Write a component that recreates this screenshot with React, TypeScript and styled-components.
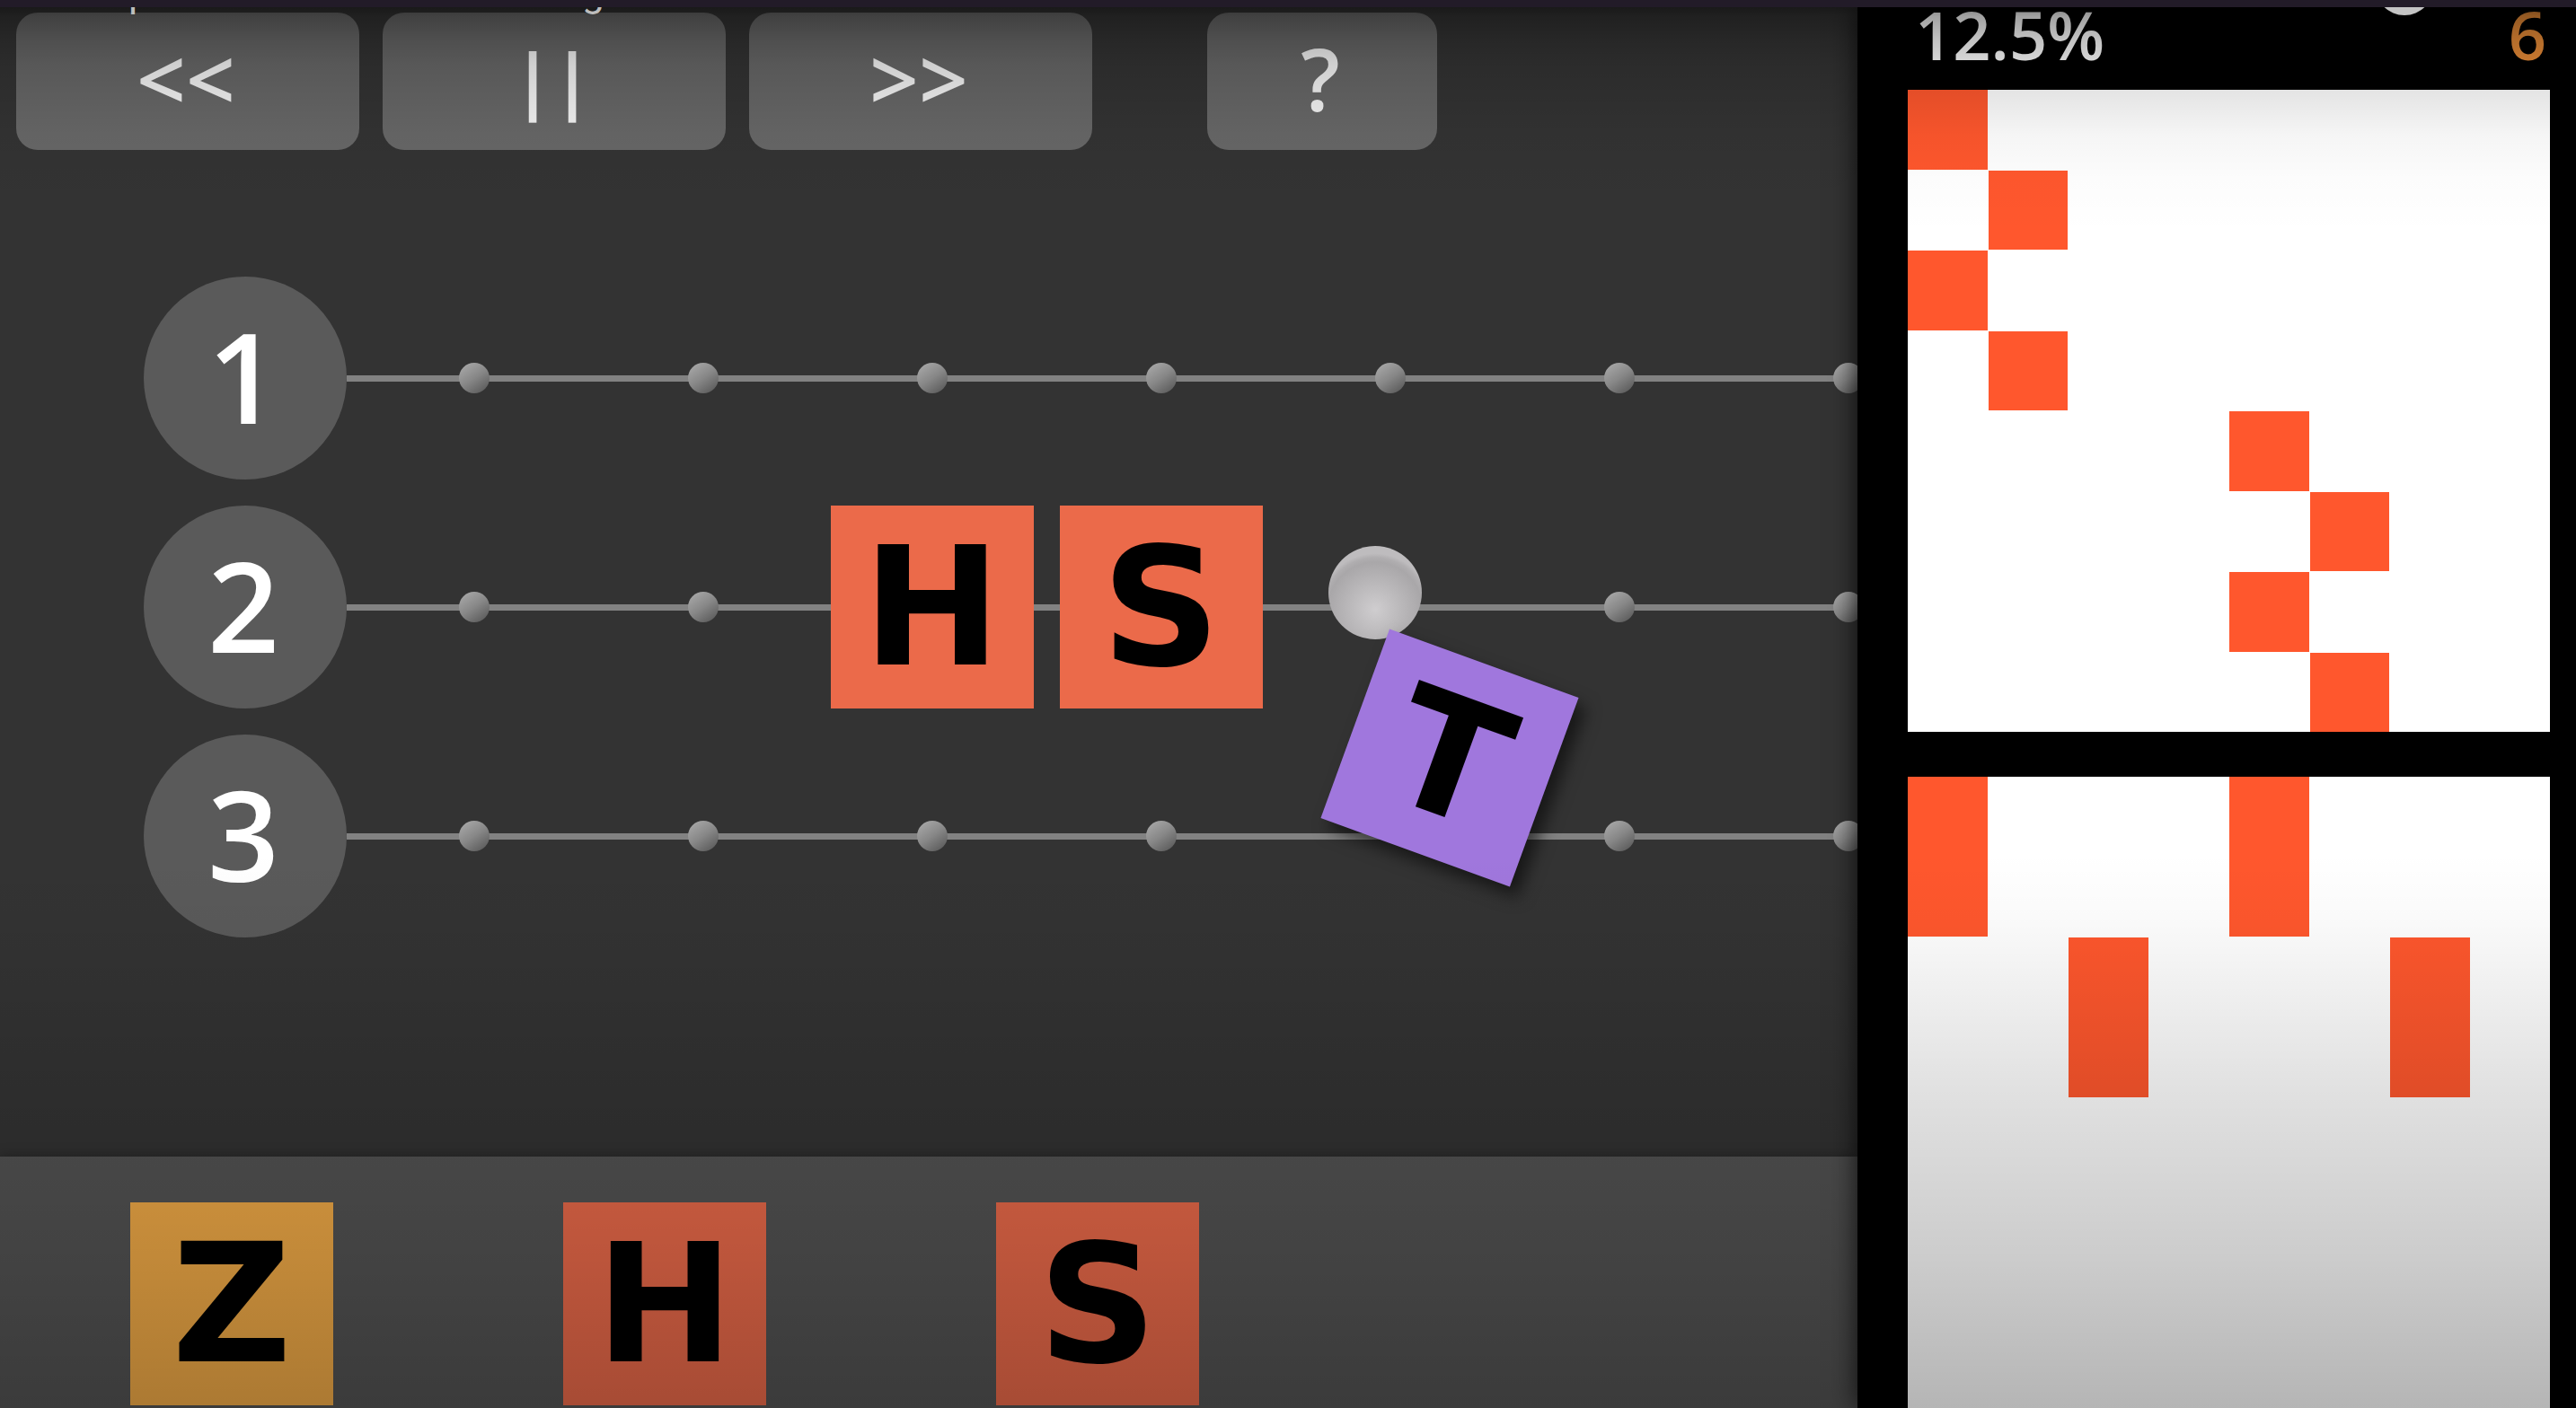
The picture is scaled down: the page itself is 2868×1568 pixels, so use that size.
import React from "react";
import styled, { createGlobalStyle } from "styled-components";

const GlobalStyle = createGlobalStyle`
  *, *::before, *::after { box-sizing: border-box; }
  body { margin: 0; background: #000; font-family: "Open Sans", "Noto Sans", sans-serif; }
`;

const Page = styled.div`
  position: relative;
  display: flex;
  flex-direction: column;
  height: 100vh;
  overflow: hidden;
`;

const WindowBar = styled.div`
  flex: none;
  height: 8px;
  background: #221b28;
  position: relative;
  z-index: 5;
`;

const Game = styled.main`
  flex: 1;
  min-height: 0;
  display: flex;
`;

const Workspace = styled.section`
  position: relative;
  flex: 1;
  min-width: 0;
  display: flex;
  flex-direction: column;
  overflow: hidden;
  background: #333;
`;

const Toolbar = styled.div`
  display: flex;
  gap: 26px;
  padding: 6px 18px 0;
`;

const ToolButton = styled.button<{ $small?: boolean }>`
  display: flex;
  align-items: center;
  justify-content: center;
  flex: none;
  width: ${(p) => (p.$small ? 256 : 382)}px;
  height: 153px;
  margin-left: ${(p) => (p.$small ? 102 : 0)}px;
  padding: 0 4px 8px 0;
  border: 0;
  border-radius: 24px;
  background: #676767;
  color: #f4f4f4;
  font: 600 96px/96px "Open Sans", "Noto Sans", sans-serif;
`;

const PauseLabel = styled.span`
  font-size: 80px;
  font-weight: 700;
`;

const Lanes = styled.div`
  flex: 1;
  min-height: 0;
  display: flex;
  flex-direction: column;
  gap: 29px;
  padding: 141px 0 0 160px;
`;

const Lane = styled.div`
  display: flex;
  flex: none;
  height: 226px;
`;

const LaneNumber = styled.div`
  flex: none;
  display: flex;
  align-items: center;
  justify-content: center;
  width: 226px;
  padding: 0 4px 6px 0;
  border-radius: 50%;
  background: #5a5a5a;
  color: #fff;
  font-size: 140px;
  line-height: 140px;
  font-weight: 600;
`;

const Track = styled.div`
  flex: 1;
  min-width: 0;
  display: flex;
  overflow: hidden;
  padding-left: 14px;
  background: linear-gradient(#828282, #828282) center / 100% 7px no-repeat;
`;

const Slot = styled.div`
  flex: 0 0 255px;
  display: flex;
  align-items: center;
  justify-content: center;
`;

const Node = styled.span`
  width: 34px;
  height: 34px;
  border-radius: 50%;
  background: linear-gradient(145deg, #a6a6a6 10%, #878787 50%, #5c5c5c 90%);
`;

const Tile = styled.div<{ $color: string }>`
  flex: none;
  display: flex;
  align-items: center;
  justify-content: center;
  width: 226px;
  height: 226px;
  background: ${(p) => p.$color};
  color: #000;
  font: 700 184px/184px "DejaVu Sans", sans-serif;
`;

const Ball = styled.span`
  position: absolute;
  left: 1479px;
  top: 600px;
  width: 104px;
  height: 104px;
  border-radius: 50%;
  background: radial-gradient(circle at 50% 68%, #cfcdcf 0, #bcbabc 30%, #a9a7a9 60%, #b0aeb0 66%, #bebcbe 71%);
`;

const HeldTile = styled(Tile)`
  position: absolute;
  left: 1502px;
  top: 724px;
  width: 224px;
  height: 224px;
  transform: rotate(20deg);
  box-shadow: 12px 8px 18px rgba(0, 0, 0, 0.55);
`;

const Tray = styled.div`
  flex: none;
  display: flex;
  gap: 256px;
  padding: 51px 145px 3px;
  background: #535353;
  box-shadow: 0 0 14px rgba(0, 0, 0, 0.3);
`;

const Side = styled.aside`
  position: relative;
  z-index: 1;
  flex: 0 0 800px;
  display: flex;
  flex-direction: column;
  padding: 0 29px 0 56px;
  background: #000;
  box-shadow: 0 0 28px rgba(0, 0, 0, 0.8);
`;

const Stats = styled.div`
  flex: none;
  display: flex;
  justify-content: space-between;
  height: 92px;
  padding: 0 4px 0 8px;
  font-size: 74px;
  line-height: 62px;
  font-weight: 600;
  color: #fff;
`;

const Count = styled.span`
  color: #ec8e38;
`;

const Pattern = styled.div<{ $rows: number }>`
  flex: none;
  display: grid;
  grid-template-columns: repeat(8, 1fr);
  grid-template-rows: repeat(${(p) => p.$rows}, 1fr);
  gap: 1px;
  aspect-ratio: 1;
  background: #fff;

  & + & { margin-top: 50px; }
`;

const Cell = styled.span<{ $col: number; $row: number }>`
  grid-column: ${(p) => p.$col + 1};
  grid-row: ${(p) => p.$row + 1};
  background: #ff572d;
`;

const Shade = styled.div`
  position: absolute;
  inset: 0;
  z-index: 3;
  pointer-events: none;
  background: linear-gradient(
    rgba(0, 0, 0, 0.5) 8px,
    rgba(0, 0, 0, 0.37) 18px,
    rgba(0, 0, 0, 0.24) 44px,
    rgba(0, 0, 0, 0.15) 72px,
    rgba(0, 0, 0, 0.1) 104px,
    rgba(0, 0, 0, 0.04) 150px,
    rgba(0, 0, 0, 0.01) 200px,
    transparent 260px,
    transparent 950px,
    rgba(0, 0, 0, 0.02) 1020px,
    rgba(0, 0, 0, 0.12) 1220px,
    rgba(0, 0, 0, 0.2) 1400px,
    rgba(0, 0, 0, 0.29) 1568px
  );
`;

/* Player header that has slid up behind the window bar. */
const Header = styled.div`
  position: absolute;
  left: 0;
  right: 0;
  top: -34px;
  z-index: 4;
  display: flex;
  height: 52px;
  padding: 0 158px 0 143px;
  font: 400 44px/52px Roboto, sans-serif;
  color: #bdbdbd;
`;

const HeaderLetter = styled.span`
  width: 505px;
`;

const Avatar = styled.span`
  width: 66px;
  height: 66px;
  margin: -15px 0 0 auto;
  border-radius: 50%;
  background: #c4c4c4;
`;

type LaneItem = "node" | "none" | "H" | "S";

const RED = "#eb6a4a";

const lanes: LaneItem[][] = [
  ["node", "node", "node", "node", "node", "node", "node"],
  ["node", "node", "H", "S", "none", "node", "node"],
  ["node", "node", "node", "node", "none", "node", "node"],
];

const tray = [
  { letter: "Z", color: "#f2ab47" },
  { letter: "H", color: RED },
  { letter: "S", color: RED },
];

const goal = [[0, 0], [1, 1], [0, 2], [1, 3], [4, 4], [5, 5], [4, 6], [5, 7]];
const output = [[0, 0], [4, 0], [2, 1], [6, 1]];

export default function App() {
  return (
    <Page>
      <GlobalStyle />
      <WindowBar />
      <Game>
        <Workspace>
          <Toolbar>
            <ToolButton aria-label="Rewind">&lt;&lt;</ToolButton>
            <ToolButton aria-label="Pause"><PauseLabel>||</PauseLabel></ToolButton>
            <ToolButton aria-label="Fast forward">&gt;&gt;</ToolButton>
            <ToolButton $small aria-label="Help">?</ToolButton>
          </Toolbar>
          <Lanes>
            {lanes.map((items, i) => (
              <Lane key={i}>
                <LaneNumber>{i + 1}</LaneNumber>
                <Track>
                  {items.map((item, j) => (
                    <Slot key={j}>
                      {item === "node" && <Node />}
                      {(item === "H" || item === "S") && <Tile $color={RED}>{item}</Tile>}
                    </Slot>
                  ))}
                </Track>
              </Lane>
            ))}
          </Lanes>
          <Tray>
            {tray.map((t) => (
              <Tile key={t.letter} $color={t.color}>{t.letter}</Tile>
            ))}
          </Tray>
          <Ball />
          <HeldTile $color="#a077dd">T</HeldTile>
        </Workspace>
        <Side>
          <Stats>
            <span>12.5%</span>
            <Count>6</Count>
          </Stats>
          <Pattern $rows={8}>
            {goal.map(([c, r]) => <Cell key={`${c}-${r}`} $col={c} $row={r} />)}
          </Pattern>
          <Pattern $rows={4}>
            {output.map(([c, r]) => <Cell key={`${c}-${r}`} $col={c} $row={r} />)}
          </Pattern>
        </Side>
      </Game>
      <Shade />
      <Header>
        <HeaderLetter>p</HeaderLetter>
        <HeaderLetter>g</HeaderLetter>
        <Avatar />
      </Header>
    </Page>
  );
}
